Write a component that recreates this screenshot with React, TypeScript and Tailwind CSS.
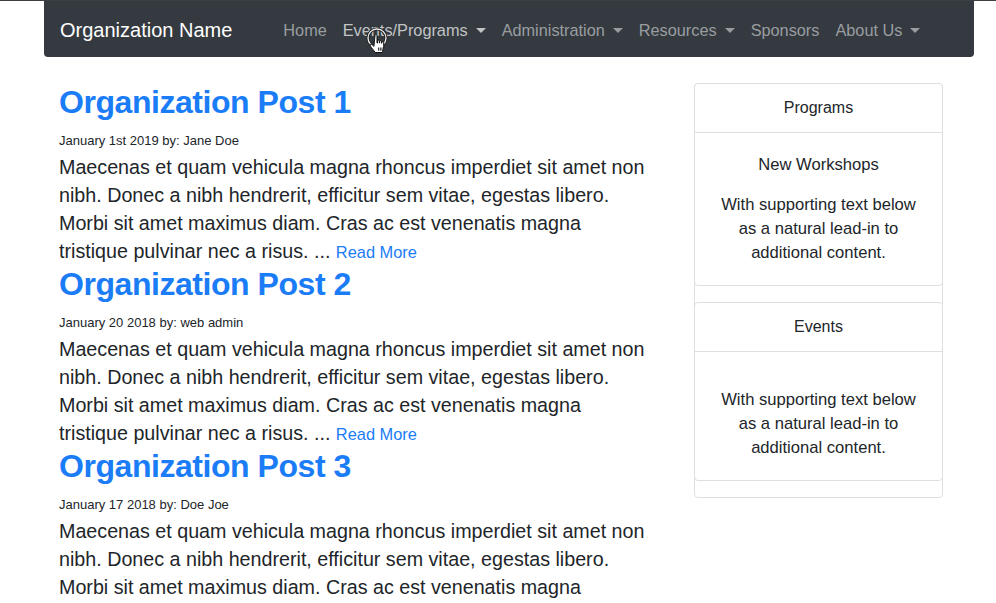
import React from 'react';

const navItems = [
  { label: 'Home', caret: false },
  { label: 'Events/Programs', caret: true, hover: true },
  { label: 'Administration', caret: true },
  { label: 'Resources', caret: true },
  { label: 'Sponsors', caret: false },
  { label: 'About Us', caret: true },
];

const lorem =
  'Maecenas et quam vehicula magna rhoncus imperdiet sit amet non nibh. Donec a nibh hendrerit, efficitur sem vitae, egestas libero. Morbi sit amet maximus diam. Cras ac est venenatis magna tristique pulvinar nec a risus. ...';

const posts = [
  { title: 'Organization Post 1', meta: 'January 1st 2019 by: Jane Doe' },
  { title: 'Organization Post 2', meta: 'January 20 2018 by: web admin' },
  { title: 'Organization Post 3', meta: 'January 17 2018 by: Doe Joe' },
];

const Caret = () => (
  <span className="ml-[8px] inline-block w-0 h-0 border-x-[5px] border-x-transparent border-t-[5px] border-t-current align-middle" />
);

const HandCursor = () => (
  <svg className="absolute left-[366px] top-[27px]" width="24" height="32" viewBox="0 0 24 32">
    <circle cx="11" cy="11" r="9" fill="none" stroke="#222" strokeWidth="3" />
    <circle cx="11" cy="11" r="9" fill="none" stroke="#eee" strokeWidth="1.3" />
    <path
      d="M9 8.5c0-1.2 2-1.2 2 0v7.5h.5v-2.2c0-1.1 1.8-1.1 1.8 0v2.2h.4v-1.6c0-1.1 1.8-1.1 1.8 0v1.8h.4v-1c0-1.1 1.8-1.1 1.8 0v4.6c0 2.6-1.4 4.2-1.4 5.7h-7.2c-.6-1.6-3.7-4.5-4.8-6.6-.6-1.2.7-2.2 1.7-1.3l1.9 1.8z"
      fill="#fff"
      stroke="#111"
      strokeWidth="1"
      strokeLinejoin="round"
    />
    <path d="M12.6 20.5v3.2M14.3 20.5v3.2M16 20.5v3.2" stroke="#111" strokeWidth="0.9" />
  </svg>
);

const SideCard: React.FC<{ header: string; title?: string }> = ({ header, title }) => (
  <div className="-mx-px -mt-px border border-[#dfdfdf] rounded-[4px] bg-white">
    <div className="h-[49px] flex items-center justify-center border-b border-[#dfdfdf] text-[16px] leading-[24px]">
      {header}
    </div>
    <div className="p-[20px] text-center text-[16.6px] leading-[24px]">
      {title ? <div className="mb-[16px] h-[24px]">{title}</div> : <div className="mb-[16px]" />}
      <p>With supporting text below as a natural lead-in to additional content.</p>
    </div>
  </div>
);

export default function App() {
  return (
    <div
      className="relative h-screen w-full overflow-hidden bg-white text-[#212529]"
      style={{ fontFamily: '"Liberation Sans", Arial, Helvetica, sans-serif' }}
    >
      <div className="h-px w-full bg-[#3b3f44]" />
      <nav className="ml-[44px] mr-[22px] h-[56px] rounded-b-[4px] bg-[#343a40] flex items-center pl-[16px] pt-[2px]">
        <span className="text-white text-[20px] leading-[30px]">Organization Name</span>
        <ul className="ml-[43px] flex items-center">
          {navItems.map((it) => (
            <li
              key={it.label}
              className={`px-[8px] flex items-center text-[16.3px] leading-[24px] ${
                it.hover ? 'text-[#c2c4c6]' : 'text-[#9a9da0]'
              }`}
            >
              {it.label}
              {it.caret && <Caret />}
            </li>
          ))}
        </ul>
      </nav>
      <HandCursor />

      <div className="flex pl-[59px] pt-[26px]">
        <main className="w-[590px]">
          {posts.map((p) => (
            <article key={p.title}>
              <h2 className="text-[#1a7cf6] text-[32px] leading-[38px] font-bold mb-[8px] tracking-[-0.45px]">
                {p.title}
              </h2>
              <div className="text-[13px] leading-[24px]">{p.meta}</div>
              <p className="text-[19.7px] leading-[28px]">
                {lorem} <a className="text-[#1a7cf6] text-[16.4px] leading-none">Read More</a>
              </p>
            </article>
          ))}
        </main>
        <aside className="ml-[45px] w-[249px]">
          <div className="border border-[#dfdfdf] rounded-[4px] pb-[16px] flex flex-col gap-[17px]">
            <SideCard header="Programs" title="New Workshops" />
            <SideCard header="Events" />
          </div>
        </aside>
      </div>
    </div>
  );
}
